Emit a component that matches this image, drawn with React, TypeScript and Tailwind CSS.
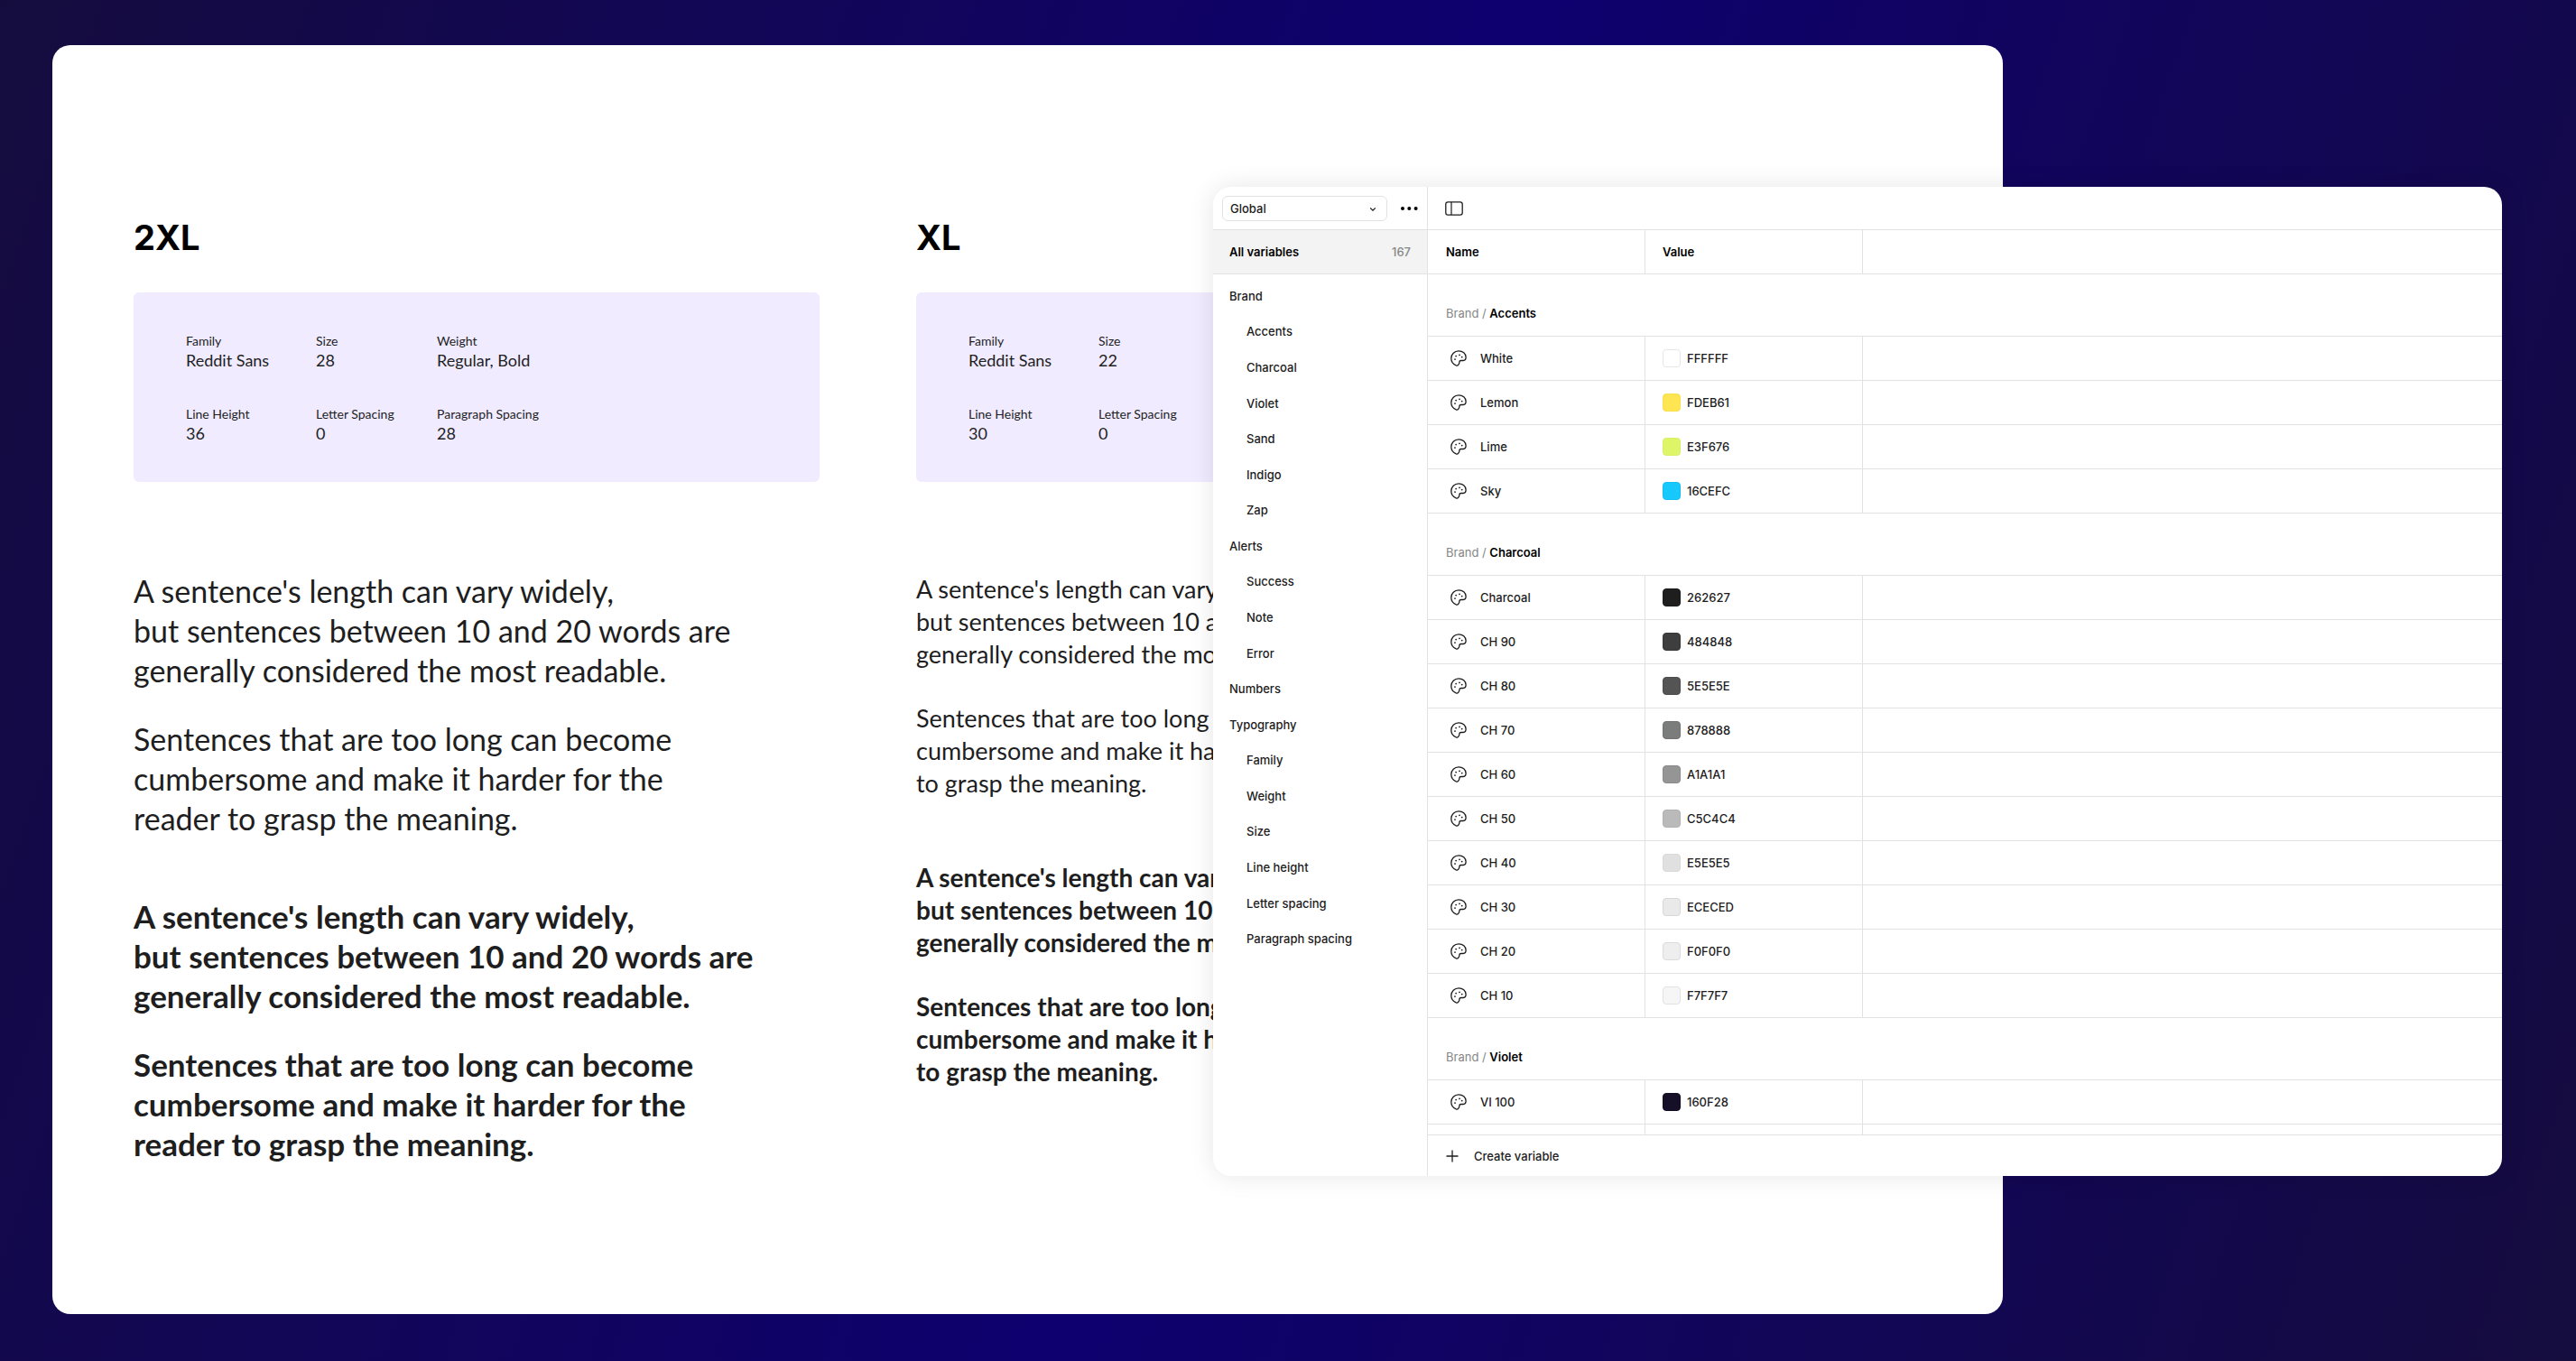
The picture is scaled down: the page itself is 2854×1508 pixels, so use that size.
import React from "react";

type Spec = { label: string; value: string };

type Sample = {
  title: string;
  specs: Spec[];
  first: string[];
  second: string[];
  large: boolean;
};

const firstLines = [
  "A sentence's length can vary widely,",
  "but sentences between 10 and 20 words are",
  "generally considered the most readable.",
];

const samples: Sample[] = [
  {
    title: "2XL",
    large: true,
    specs: [
      { label: "Family", value: "Reddit Sans" },
      { label: "Size", value: "28" },
      { label: "Weight", value: "Regular, Bold" },
      { label: "Line Height", value: "36" },
      { label: "Letter Spacing", value: "0" },
      { label: "Paragraph Spacing", value: "28" },
    ],
    first: firstLines,
    second: [
      "Sentences that are too long can become",
      "cumbersome and make it harder for the",
      "reader to grasp the meaning.",
    ],
  },
  {
    title: "XL",
    large: false,
    specs: [
      { label: "Family", value: "Reddit Sans" },
      { label: "Size", value: "22" },
      { label: "Line Height", value: "30" },
      { label: "Letter Spacing", value: "0" },
    ],
    first: firstLines,
    second: [
      "Sentences that are too long can become",
      "cumbersome and make it harder for the reader",
      "to grasp the meaning.",
    ],
  },
];

const navigation: { label: string; nested: boolean }[] = [
  { label: "Brand", nested: false },
  { label: "Accents", nested: true },
  { label: "Charcoal", nested: true },
  { label: "Violet", nested: true },
  { label: "Sand", nested: true },
  { label: "Indigo", nested: true },
  { label: "Zap", nested: true },
  { label: "Alerts", nested: false },
  { label: "Success", nested: true },
  { label: "Note", nested: true },
  { label: "Error", nested: true },
  { label: "Numbers", nested: false },
  { label: "Typography", nested: false },
  { label: "Family", nested: true },
  { label: "Weight", nested: true },
  { label: "Size", nested: true },
  { label: "Line height", nested: true },
  { label: "Letter spacing", nested: true },
  { label: "Paragraph spacing", nested: true },
];

type Variable = { name: string; value: string; swatch: string };

const groups: { name: string; variables: Variable[] }[] = [
  {
    name: "Accents",
    variables: [
      { name: "White", value: "FFFFFF", swatch: "bg-white border-[#e6e6e6]" },
      { name: "Lemon", value: "FDEB61", swatch: "bg-[#fee552] border-[#f8df50]" },
      { name: "Lime", value: "E3F676", swatch: "bg-[#def568] border-[#d9ef66]" },
      { name: "Sky", value: "16CEFC", swatch: "bg-[#16c8fc] border-[#14c0f3]" },
    ],
  },
  {
    name: "Charcoal",
    variables: [
      { name: "Charcoal", value: "262627", swatch: "bg-[#1e1e1f] border-[#1b1b1c]" },
      { name: "CH 90", value: "484848", swatch: "bg-[#3e3e3e] border-[#393939]" },
      { name: "CH 80", value: "5E5E5E", swatch: "bg-[#545454] border-[#4d4d4d]" },
      { name: "CH 70", value: "878888", swatch: "bg-[#7b7c7c] border-[#717272]" },
      { name: "CH 60", value: "A1A1A1", swatch: "bg-[#959595] border-[#898989]" },
      { name: "CH 50", value: "C5C4C4", swatch: "bg-[#bababa] border-[#b0b0b0]" },
      { name: "CH 40", value: "E5E5E5", swatch: "bg-[#e0e0e0] border-[#d9d9d9]" },
      { name: "CH 30", value: "ECECED", swatch: "bg-[#e9e9e9] border-[#d7d7d7]" },
      { name: "CH 20", value: "F0F0F0", swatch: "bg-[#eeeeee] border-[#dbdbdb]" },
      { name: "CH 10", value: "F7F7F7", swatch: "bg-[#f6f6f6] border-[#e1e1e1]" },
    ],
  },
  {
    name: "Violet",
    variables: [{ name: "VI 100", value: "160F28", swatch: "bg-[#160f28] border-[#120c22]" }],
  },
];

function PaletteIcon() {
  return (
    <svg viewBox="0 0 18 18" className="size-[18px] shrink-0" fill="none" aria-hidden="true">
      <path
        d="M6.200 16.900C3 15.600.8 12.800.8 9.100.8 4.400 4.500.8 9.100.8c4.500 0 8 2.900 8 7 0 2.400-1 3.700-2.900 3.700h-2.300c-1.300 0-2 .8-2 1.800 0 1.400-.5 2.500-1.400 3.300-.7.6-1.500.6-2.300.3Z"
        stroke="#1c1c1c"
        strokeWidth="1.3"
        strokeLinejoin="round"
      />
      <circle cx="5" cy="10.1" r=".9" fill="#1c1c1c" />
      <circle cx="6.100" cy="6.600" r=".9" fill="#1c1c1c" />
      <circle cx="10" cy="5.300" r=".9" fill="#1c1c1c" />
      <circle cx="12.700" cy="7.600" r=".9" fill="#1c1c1c" />
    </svg>
  );
}

function TypeSample({ sample }: { sample: Sample }) {
  const specGrid = sample.large
    ? "grid-cols-[144px_134px_auto]"
    : "grid-cols-[144px_134px]";
  const body = sample.large
    ? "mt-[99px] flex flex-col gap-16 leading-[44px]"
    : "mt-[101px] flex flex-col gap-[68px] leading-[36px]";
  const block = sample.large ? "flex flex-col gap-8" : "flex flex-col gap-[35px]";
  const weights = sample.large
    ? ["text-[34px] font-normal", "text-[35px] font-bold"]
    : ["text-[27px] font-normal", "text-[28px] font-bold"];

  return (
    <section className="w-[760px] shrink-0 whitespace-nowrap">
      <h2 className="font-['Inter',sans-serif] text-[38px] leading-[44px] font-bold text-black">
        {sample.title}
      </h2>
      <dl
        className={`mt-[39px] grid gap-y-[39px] rounded-md bg-[#f0ebff] pt-11 pb-[43px] pl-[58px] ${specGrid}`}
      >
        {sample.specs.map((spec) => (
          <div key={spec.label}>
            <dt className="text-[14px] leading-5">{spec.label}</dt>
            <dd className="text-[18px] leading-[22px]">{spec.value}</dd>
          </div>
        ))}
      </dl>
      <div className={body}>
        {weights.map((weight) => (
          <div key={weight} className={`${weight} ${sample.large ? "leading-[44px]" : "leading-[36px]"}`}>
            <div className={block}>
              {[sample.first, sample.second].map((lines) => (
                <p key={lines[0]}>
                  {lines.map((line) => (
                    <span key={line} className="block">
                      {line}
                    </span>
                  ))}
                </p>
              ))}
            </div>
          </div>
        ))}
      </div>
    </section>
  );
}

function Sidebar() {
  return (
    <aside className="w-[238px] shrink-0 border-r border-[#e2e2e2]">
      <div className="flex h-12 items-center border-b border-[#e2e2e2] pl-[10px]">
        <div className="relative">
          <select
            aria-label="Collection"
            defaultValue="Global"
            className="h-7 w-[183px] appearance-none rounded-md border border-[#e2e2e2] bg-white pl-2"
          >
            <option>Global</option>
          </select>
          <svg
            viewBox="0 0 8 6"
            className="pointer-events-none absolute top-[12px] right-[12px] h-[6px] w-2"
            fill="none"
            aria-hidden="true"
          >
            <path d="M1.2 1.4 4 4.1l2.8-2.7" stroke="#1c1c1c" strokeWidth="1.3" />
          </svg>
        </div>
        <button type="button" aria-label="More options" className="ml-[14px]">
          <svg viewBox="0 0 20 6" className="h-[6px] w-5" fill="#000" aria-hidden="true">
            <circle cx="3" cy="3" r="2" />
            <circle cx="10.3" cy="3" r="2" />
            <circle cx="17.6" cy="3" r="2" />
          </svg>
        </button>
      </div>
      <button
        type="button"
        className="flex h-[49px] w-full items-center justify-between border-b border-[#e2e2e2] bg-[#f3f3f3] pr-[18px] pl-[18px]"
      >
        <span className="font-semibold text-black">All variables</span>
        <span className="text-[#868686]">167</span>
      </button>
      <nav className="grid h-[756px] auto-rows-fr pt-1">
        {navigation.map((item) => (
          <button
            key={item.label}
            type="button"
            className={item.nested ? "pl-[37px] text-left" : "pl-[18px] text-left"}
          >
            {item.label}
          </button>
        ))}
      </nav>
    </aside>
  );
}

function VariableTable() {
  return (
    <table className="w-full table-fixed border-separate border-spacing-0 text-left">
      <colgroup>
        <col className="w-[241px]" />
        <col className="w-[241px]" />
        <col />
      </colgroup>
      <thead>
        <tr>
          <th className="h-[49px] border-r border-b border-[#e2e2e2] pl-5 font-semibold text-black">
            Name
          </th>
          <th className="h-[49px] border-r border-b border-[#e2e2e2] pl-[19px] font-semibold text-black">
            Value
          </th>
          <td className="h-[49px] border-b border-[#e2e2e2]" />
        </tr>
      </thead>
      {groups.map((group) => (
        <tbody key={group.name}>
          <tr>
            <th
              colSpan={3}
              className="h-[69px] border-b border-[#e2e2e2] pt-[18px] pl-5 font-normal text-[#868686]"
            >
              Brand / <span className="font-semibold text-black">{group.name}</span>
            </th>
          </tr>
          {group.variables.map((variable) => (
            <tr key={variable.name}>
              <td className="h-[49px] border-r border-b border-[#e2e2e2] pl-[25px]">
                <div className="flex items-center gap-[15px]">
                  <PaletteIcon />
                  {variable.name}
                </div>
              </td>
              <td className="h-[49px] border-r border-b border-[#e2e2e2] pl-[19px]">
                <div className="flex items-center gap-[7px]">
                  <span className={`size-5 rounded-[4px] border ${variable.swatch}`} />
                  {variable.value}
                </div>
              </td>
              <td className="h-[49px] border-b border-[#e2e2e2]" />
            </tr>
          ))}
        </tbody>
      ))}
      <tbody>
        <tr>
          <td className="h-[49px] border-r border-[#e2e2e2]" />
          <td className="h-[49px] border-r border-[#e2e2e2]" />
          <td className="h-[49px]" />
        </tr>
      </tbody>
    </table>
  );
}

function VariablesDialog() {
  return (
    <section
      aria-label="Variables"
      className="absolute top-[207px] right-[82px] bottom-[205px] left-[1344px] flex overflow-hidden rounded-[20px] bg-white font-['Inter',sans-serif] text-[13px] leading-5 font-medium text-[#1c1c1c] shadow-[0_0_28px_rgba(0,0,0,0.1)]"
    >
      <Sidebar />
      <div className="flex min-w-0 flex-1 flex-col">
        <div className="flex h-12 shrink-0 items-center border-b border-[#e2e2e2] pl-[19px]">
          <button type="button" aria-label="Toggle sidebar">
            <svg viewBox="0 0 20 16" className="h-4 w-5" fill="none" stroke="#1c1c1c" aria-hidden="true">
              <rect x=".8" y=".8" width="18.4" height="14.4" rx="2.4" strokeWidth="1.3" />
              <path d="M7 1v14" strokeWidth="1.2" />
            </svg>
          </button>
        </div>
        <div className="min-h-0 flex-1 overflow-hidden">
          <VariableTable />
        </div>
        <button
          type="button"
          className="flex h-[46px] shrink-0 items-center gap-[17px] border-t border-[#e2e2e2] pl-5"
        >
          <svg viewBox="0 0 14 14" className="size-[14px]" stroke="#1c1c1c" strokeWidth="1.3" aria-hidden="true">
            <path d="M7 .5v13M.5 7h13" />
          </svg>
          Create variable
        </button>
      </div>
    </section>
  );
}

export default function App() {
  return (
    <main className="relative flex min-h-screen bg-[linear-gradient(109deg,#150c3e_0%,#0e006f_50%,#150c3e_100%)] pt-[50px] pr-[635px] pb-[52px] pl-[58px] font-['Lato',sans-serif] text-[#1e1e1f]">
      <div className="flex min-w-0 flex-1 gap-[107px] overflow-hidden rounded-[20px] bg-white pt-[191px] pl-[90px]">
        {samples.map((sample) => (
          <TypeSample key={sample.title} sample={sample} />
        ))}
      </div>
      <VariablesDialog />
    </main>
  );
}
